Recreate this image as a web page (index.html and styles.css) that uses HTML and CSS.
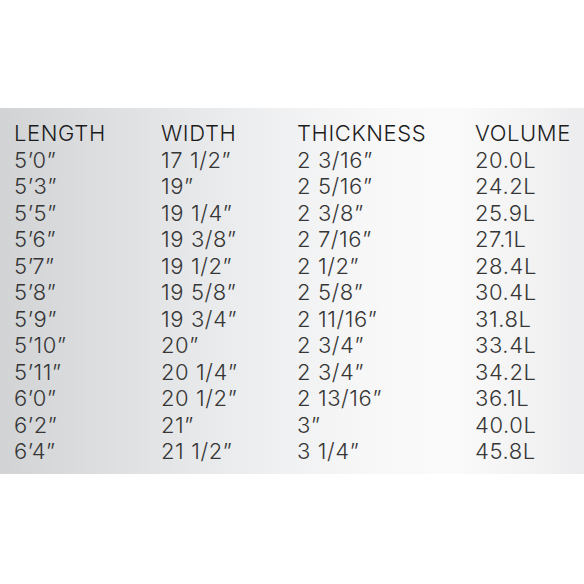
FILE: index.html
```html
<!DOCTYPE html>
<html>
<head>
<meta charset="utf-8">
<link rel="stylesheet" href="styles.css">
</head>
<body>
<div class="page">
  <div class="panel">
    <div class="table">
      <div class="h">LENGTH</div><div class="h">WIDTH</div><div class="h">THICKNESS</div><div class="h">VOLUME</div>
      <div>5’0”</div><div>17 1/2”</div><div>2 3/16”</div><div>20.0L</div>
      <div>5’3”</div><div>19”</div><div>2 5/16”</div><div>24.2L</div>
      <div>5’5”</div><div>19 1/4”</div><div>2 3/8”</div><div>25.9L</div>
      <div>5’6”</div><div>19 3/8”</div><div>2 7/16”</div><div>27.1L</div>
      <div>5’7”</div><div>19 1/2”</div><div>2 1/2”</div><div>28.4L</div>
      <div>5’8”</div><div>19 5/8”</div><div>2 5/8”</div><div>30.4L</div>
      <div>5’9”</div><div>19 3/4”</div><div>2 11/16”</div><div>31.8L</div>
      <div>5’10”</div><div>20”</div><div>2 3/4”</div><div>33.4L</div>
      <div>5’11”</div><div>20 1/4”</div><div>2 3/4”</div><div>34.2L</div>
      <div>6’0”</div><div>20 1/2”</div><div>2 13/16”</div><div>36.1L</div>
      <div>6’2”</div><div>21”</div><div>3”</div><div>40.0L</div>
      <div>6’4”</div><div>21 1/2”</div><div>3 1/4”</div><div>45.8L</div>
    </div>
  </div>
</div>
</body>
</html>
```
FILE: styles.css
```css
html, body {
  margin: 0;
  padding: 0;
  background: #ffffff;
}
.page {
  width: 584px;
  height: 584px;
  padding-top: 108px;
  box-sizing: border-box;
}
.panel {
  height: 366px;
  background: linear-gradient(90deg, #d1d3d5 0%, #e2e3e5 25%, #eeeff0 45%, #f8f8f9 65%, #fafafa 78%, #f2f2f3 92%, #ececee 100%);
  padding: 12px 0 0 14px;
  box-sizing: border-box;
}
.table {
  display: grid;
  grid-template-columns: 147px 136px 178px auto;
  grid-auto-rows: 26.5px;
  font-family: "Inter", "Liberation Sans", sans-serif;
  font-weight: 300;
  font-size: 22px;
  letter-spacing: 0.6px;
  line-height: 26.5px;
  color: #363636;
  white-space: nowrap;
}
.h {
  color: #1c1c1c;
}
```
